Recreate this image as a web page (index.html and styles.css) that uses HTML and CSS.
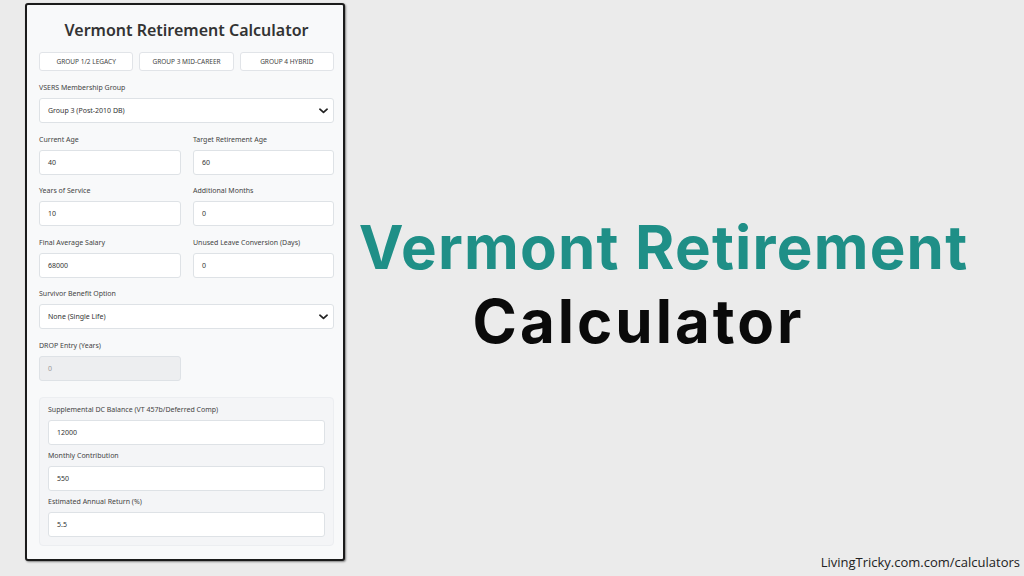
FILE: index.html
```html
<!DOCTYPE html>
<html lang="en">
<head>
<meta charset="utf-8">
<title>Vermont Retirement Calculator</title>
<link rel="stylesheet" href="styles.css">
</head>
<body>
<div class="page">
  <div class="card">
    <h1 class="card-title">Vermont Retirement Calculator</h1>
    <div class="presets">
      <button class="preset">GROUP 1/2 LEGACY</button>
      <button class="preset">GROUP 3 MID-CAREER</button>
      <button class="preset">GROUP 4 HYBRID</button>
    </div>

    <div class="field">
      <label class="label">VSERS Membership Group</label>
      <div class="select">
        <span>Group 3 (Post-2010 DB)</span>
        <svg class="chev" viewBox="0 0 10 6" width="9" height="6"><path d="M1 1l4 3.6L9 1" fill="none" stroke="#222" stroke-width="1.9" stroke-linecap="round" stroke-linejoin="round"/></svg>
      </div>
    </div>

    <div class="row">
      <div class="field">
        <label class="label">Current Age</label>
        <div class="input">40</div>
      </div>
      <div class="field">
        <label class="label">Target Retirement Age</label>
        <div class="input">60</div>
      </div>
    </div>

    <div class="row">
      <div class="field">
        <label class="label">Years of Service</label>
        <div class="input">10</div>
      </div>
      <div class="field">
        <label class="label">Additional Months</label>
        <div class="input">0</div>
      </div>
    </div>

    <div class="row">
      <div class="field">
        <label class="label">Final Average Salary</label>
        <div class="input">68000</div>
      </div>
      <div class="field">
        <label class="label">Unused Leave Conversion (Days)</label>
        <div class="input">0</div>
      </div>
    </div>

    <div class="field">
      <label class="label">Survivor Benefit Option</label>
      <div class="select">
        <span>None (Single Life)</span>
        <svg class="chev" viewBox="0 0 10 6" width="9" height="6"><path d="M1 1l4 3.6L9 1" fill="none" stroke="#222" stroke-width="1.9" stroke-linecap="round" stroke-linejoin="round"/></svg>
      </div>
    </div>

    <div class="row">
      <div class="field">
        <label class="label">DROP Entry (Years)</label>
        <div class="input disabled">0</div>
      </div>
    </div>

    <div class="supp">
      <div class="field tight">
        <label class="label">Supplemental DC Balance (VT 457b/Deferred Comp)</label>
        <div class="input">12000</div>
      </div>
      <div class="field tight">
        <label class="label">Monthly Contribution</label>
        <div class="input">550</div>
      </div>
      <div class="field tight last">
        <label class="label">Estimated Annual Return (%)</label>
        <div class="input">5.5</div>
      </div>
    </div>
  </div>

  <div class="side">
    <div class="hero">
      <div class="hero-line teal">Vermont Retirement</div>
      <div class="hero-line dark">Calculator</div>
    </div>
    <div class="footer">LivingTricky.com.com/calculators</div>
  </div>
</div>
</body>
</html>
```

FILE: styles.css
```css
* { box-sizing: border-box; }

html, body {
  margin: 0;
  padding: 0;
}

body {
  width: 1024px;
  height: 576px;
  background: #ebebeb;
  overflow: hidden;
  font-family: "Noto Sans", "Open Sans", sans-serif;
}

.page {
  display: flex;
  height: 576px;
}

.card {
  width: 320px;
  height: 558px;
  margin: 3px 0 0 25px;
  border: 2px solid #1b1b1b;
  border-radius: 3px;
  background: #f8f9fa;
  box-shadow: 1px 1px 2px rgba(0, 0, 0, 0.45);
  padding: 0 9px 0 12px;
}

.card-title {
  margin: 15px 0 12px;
  height: 20px;
  line-height: 20px;
  font-size: 16px;
  font-weight: 600;
  color: #333;
  text-align: center;
}

.presets {
  display: grid;
  grid-template-columns: 1fr 1fr 1fr;
  gap: 6px;
  margin-bottom: 12px;
}

.preset {
  height: 19px;
  padding: 0;
  border: 1px solid #e1e4e8;
  border-radius: 3px;
  background: #fff;
  font-family: inherit;
  font-size: 6.5px;
  color: #444;
}

.field {
  margin-bottom: 11.6px;
}

.row {
  display: grid;
  grid-template-columns: 142px 141px;
  column-gap: 12px;
}

.label {
  display: block;
  height: 10px;
  line-height: 10px;
  margin-bottom: 5px;
  font-size: 7px;
  color: #444;
}

.input,
.select {
  height: 25px;
  border: 1px solid #dee2e6;
  border-radius: 3px;
  background: #fff;
  padding: 0 8px;
  display: flex;
  align-items: center;
  font-size: 7px;
  color: #333;
}

.select {
  justify-content: space-between;
  padding-right: 5px;
}

.chev {
  display: block;
}

.input.disabled {
  background: #edeef0;
  color: #9a9a9a;
}

.supp {
  margin-top: 4px;
  border: 1px solid #eceef1;
  border-radius: 4px;
  background: #f4f5f7;
  padding: 7px 8px 8px;
}

.field.tight {
  margin-bottom: 6px;
}

.field.last {
  margin-bottom: 0;
}

.side {
  flex: 1;
  display: flex;
  flex-direction: column;
}

.hero {
  flex: 1;
  display: flex;
  flex-direction: column;
  justify-content: center;
  padding-top: 14px;
  font-family: Inter, "Noto Sans", sans-serif;
  font-weight: 700;
}

.hero-line {
  font-size: 60px;
  line-height: 74px;
  text-align: center;
}

.teal {
  color: #1f8f87;
  letter-spacing: 1.2px;
  padding-right: 42px;
}

.dark {
  color: #0a0a0a;
  letter-spacing: 3px;
  padding-right: 92px;
}

.footer {
  text-align: right;
  padding: 0 4px 5px 0;
  font-family: "Open Sans", "Noto Sans", sans-serif;
  font-size: 13px;
  line-height: 18px;
  color: #222;
}
```
